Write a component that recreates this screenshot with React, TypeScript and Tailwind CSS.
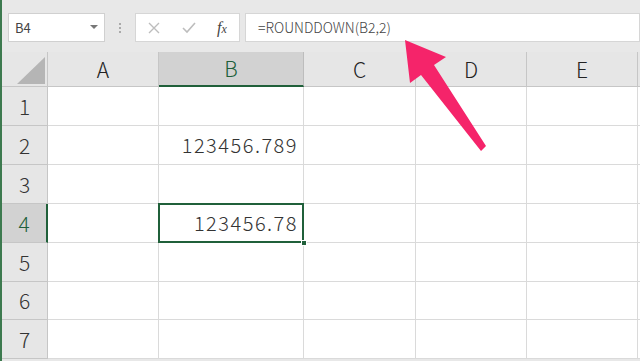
import React from 'react';

const cols = ['A', 'B', 'C', 'D', 'E'];
const rows = [1, 2, 3, 4, 5, 6, 7];

const values: Record<string, string> = {
  B2: '123456.789',
  B4: '123456.78',
};

function ColHeader({ label }: { label: string }) {
  const active = label === 'B';
  return (
    <div
      className={
        active
          ? 'flex items-center justify-center bg-[#d2d2d2] border-r border-[#bdbdbd] border-b-2 border-b-[#20603a] text-[#20603a]'
          : 'flex items-center justify-center bg-[#e6e6e6] border-r border-b border-[#c6c6c6] text-[#222]'
      }
    >
      <span className="text-[21px] font-light leading-none">{label}</span>
    </div>
  );
}

function RowHeader({ n }: { n: number }) {
  const active = n === 4;
  return (
    <div
      className={
        active
          ? 'flex items-center justify-center bg-[#d2d2d2] border-b border-[#c6c6c6] border-r-2 border-r-[#20603a] text-[#20603a]'
          : 'flex items-center justify-center bg-[#e6e6e6] border-b border-r border-[#c6c6c6] text-[#333]'
      }
    >
      <span className="text-[21px] font-light leading-none">{n}</span>
    </div>
  );
}

function Cell({ id }: { id: string }) {
  const selected = id === 'B4';
  return (
    <div className={selected ? 'relative z-10 flex items-center justify-end bg-white pr-[5px] border-r border-b border-[#dadada]' : 'flex items-center justify-end bg-white pr-[5px] border-r border-b border-[#dadada]'}>
      <span className="text-[20px] font-light tracking-[1.5px] leading-none text-[#333]">{values[id] ?? ''}</span>
      {selected && (
        <>
          <div className="absolute -left-px -top-px -right-px -bottom-px border-2 border-[#20603a]" />
          <div className="absolute -right-[4px] -bottom-[4px] w-[6px] h-[6px] bg-[#20603a] border border-white" />
        </>
      )}
    </div>
  );
}

export default function App() {
  return (
    <div
      className="relative w-[640px] h-[361px] overflow-hidden bg-[#e8e8e8] border-l-2 border-[#3d7a4f]"
      style={{ fontFamily: '"Noto Sans CJK JP", "Noto Sans", sans-serif' }}
    >
      {/* formula bar */}
      <div className="h-[42px] pt-[13px] flex items-stretch">
        <div className="ml-[6px] w-[97px] h-[29px] bg-white border border-[#d0d0d0] flex items-center justify-between pl-[6px] pr-[6px]">
          <span className="text-[13px] text-[#444]">B4</span>
          <svg width="8" height="5" viewBox="0 0 8 5">
            <path d="M0 0 L8 0 L4 4 Z" fill="#777" />
          </svg>
        </div>
        <div className="w-[30px] flex flex-col items-center justify-center gap-[2px]">
          <span className="w-[2px] h-[2px] bg-[#aaa]" />
          <span className="w-[2px] h-[2px] bg-[#aaa]" />
          <span className="w-[2px] h-[2px] bg-[#aaa]" />
        </div>
        <div className="w-[105px] h-[29px] bg-white border border-[#d6d6d6] flex items-center pl-[12px]">
          <svg width="12" height="12" viewBox="0 0 12 12">
            <path d="M1 1 L11 11 M11 1 L1 11" stroke="#bdbdbd" strokeWidth="1.4" />
          </svg>
          <svg width="14" height="12" viewBox="0 0 14 12" className="ml-[22px]">
            <path d="M1 6 L5 10 L13 1" stroke="#bdbdbd" strokeWidth="1.6" fill="none" />
          </svg>
          <span className="ml-[21px] text-[16px] leading-none italic text-[#444]" style={{ fontFamily: '"Liberation Serif", serif' }}>
            f<span className="text-[12px]">x</span>
          </span>
        </div>
        <div className="ml-[5px] flex-1 h-[29px] bg-white border border-[#d6d6d6] flex items-center pl-[12px]">
          <span className="text-[14px] font-light text-[#444]">=ROUNDDOWN(B2,2)</span>
        </div>
      </div>

      {/* sheet */}
      <div className="mt-[10px] grid grid-cols-[46px_111px_145px_112px_111px_111px_4px] grid-rows-[35px_39px_39px_39px_39px_39px_38px_39px]">
        <div className="relative bg-[#e6e6e6] border-r border-b border-[#c6c6c6]">
          <svg className="absolute left-[15px] top-[5px]" width="29" height="28" viewBox="0 0 29 28">
            <path d="M0 27 L28 0 L28 27 Z" fill="#b5b5b5" />
          </svg>
        </div>
        {cols.map((c) => (
          <ColHeader key={c} label={c} />
        ))}
        <div className="bg-[#e6e6e6] border-b border-[#c6c6c6]" />
        {rows.map((r) => (
          <React.Fragment key={r}>
            <RowHeader n={r} />
            {cols.map((c) => (
              <Cell key={c + r} id={c + r} />
            ))}
            <div className="bg-white border-b border-[#dadada]" />
          </React.Fragment>
        ))}
      </div>

      {/* annotation arrow */}
      <svg className="absolute left-0 top-0 pointer-events-none" width="640" height="361" viewBox="0 0 640 361">
        <polygon
          points="403,40 444,57 432,65 484,146 479,151 419,75 408,83"
          fill="#f5246a"
          strokeLinejoin="round"
        />
      </svg>
    </div>
  );
}
